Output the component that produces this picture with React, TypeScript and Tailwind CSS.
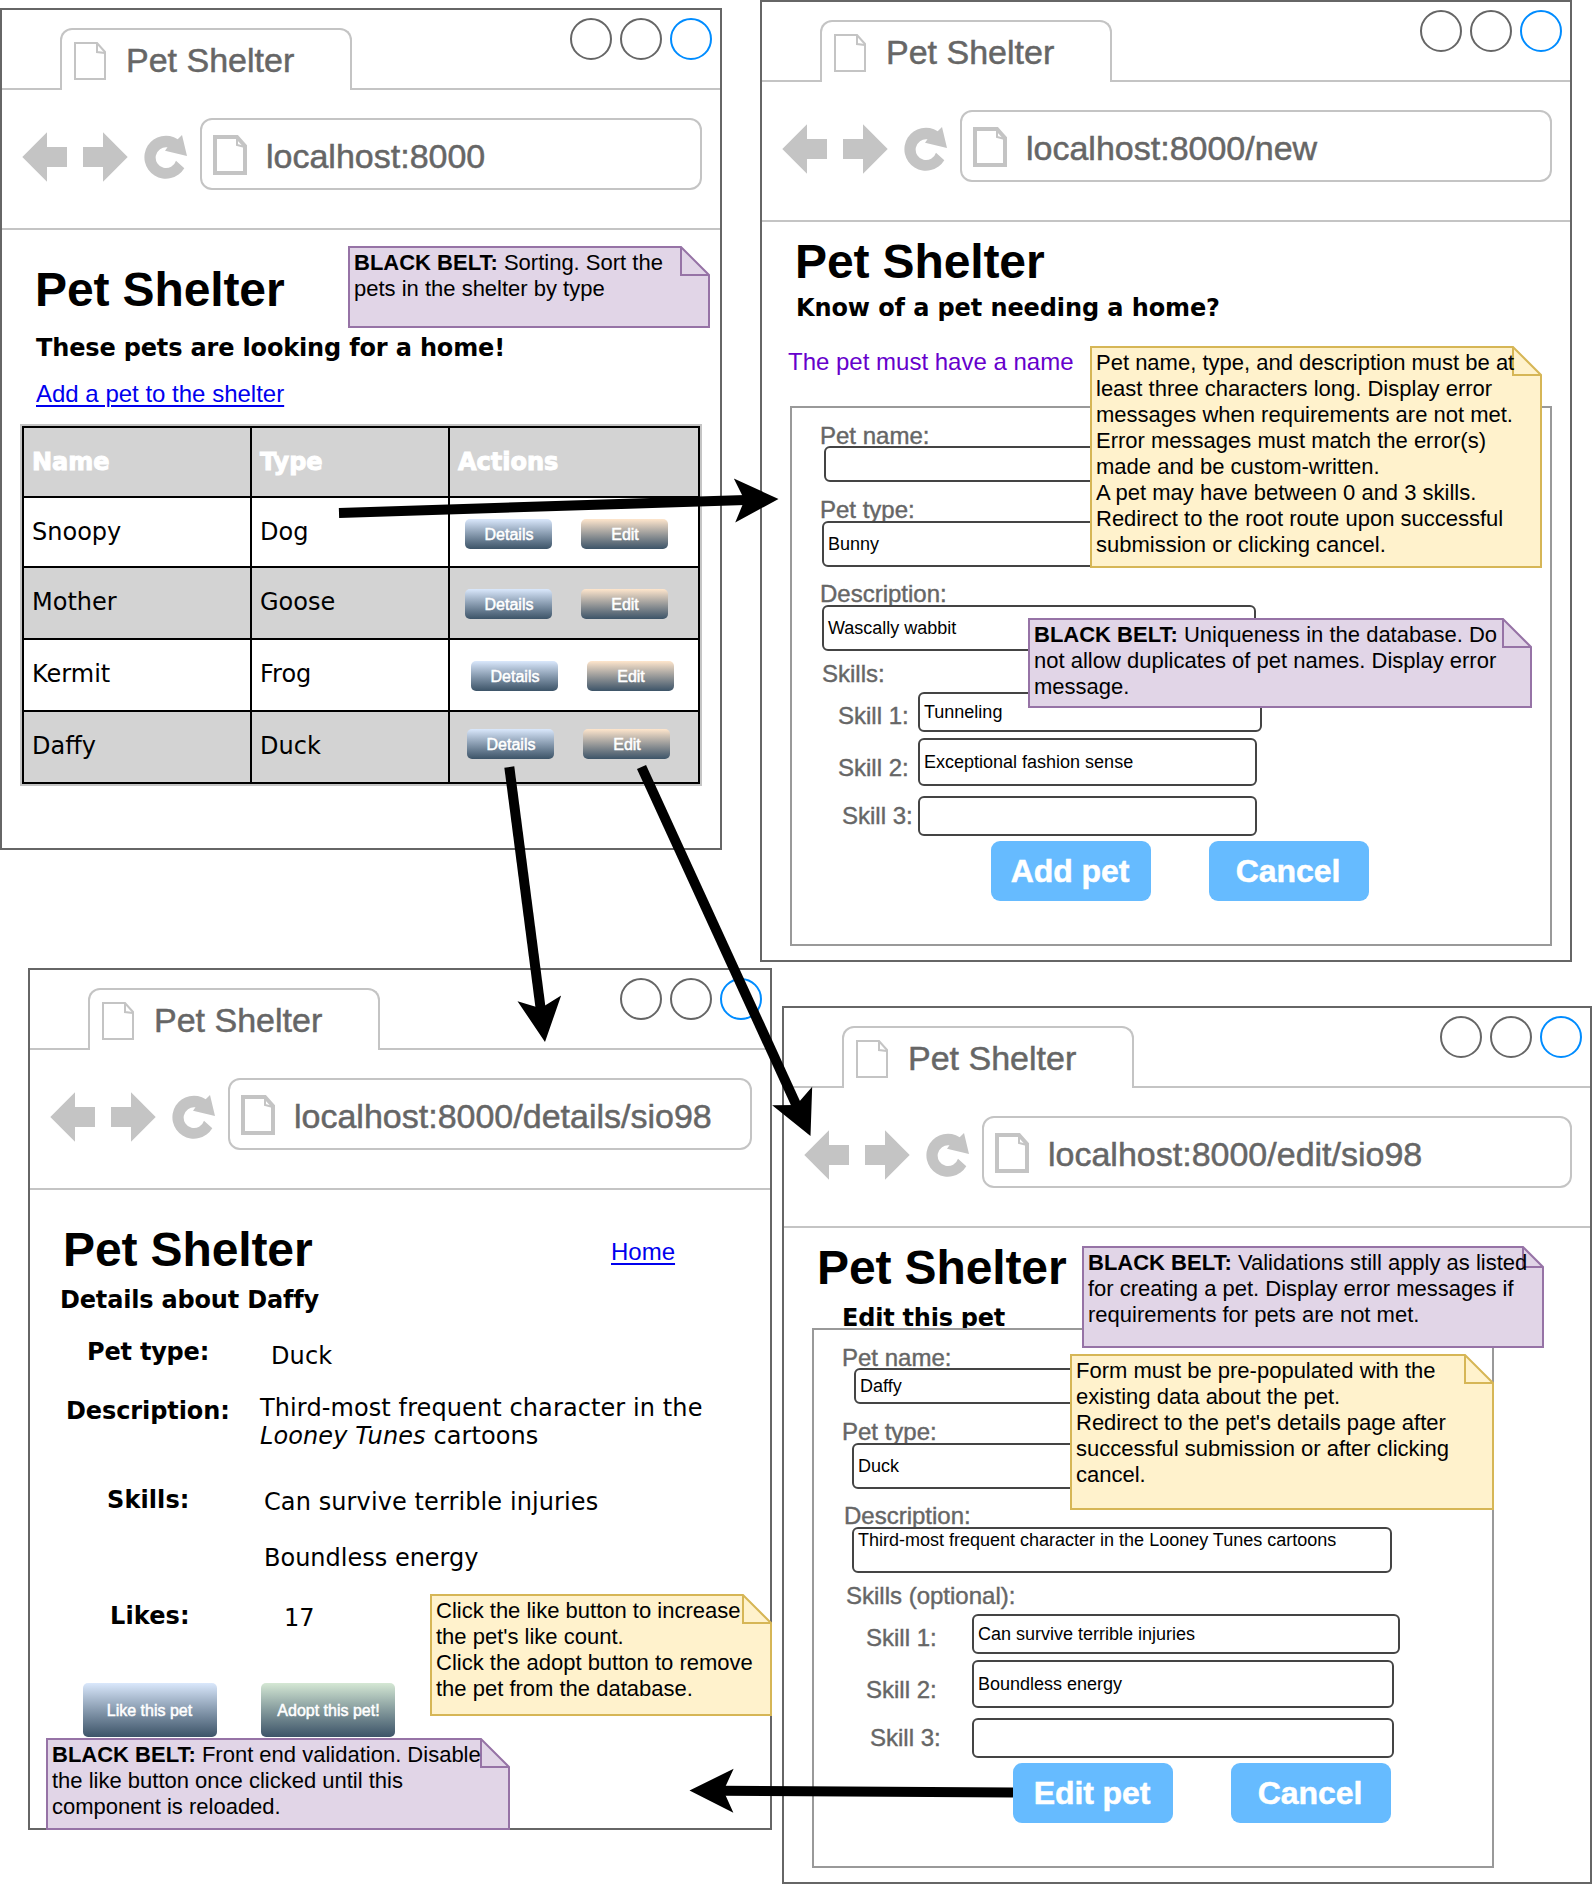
import React from "react";

const arial = "font-['Liberation_Sans',Arial,sans-serif]";
const verdana = "font-['DejaVu_Sans',Verdana,sans-serif]";

function BrowserWindow({ className, url, children }: { className: string; url: string; children: React.ReactNode }) {
  return (
    <section className={`absolute flex flex-col border-2 border-[#666666] bg-white ${className}`}>
      <header className="flex h-[220px] shrink-0 flex-col border-b-2 border-[#c4c4c4] text-[34px] leading-10 text-[#666666]">
        <div className="flex h-20 shrink-0">
          <div className="w-[58px] border-b-2 border-[#c4c4c4]" />
          <div className="mt-[18px] flex w-[292px] rounded-t-[12px] border-x-2 border-t-2 border-[#c4c4c4]">
            <svg className="mt-3 ml-3 h-[38px] w-8 shrink-0" viewBox="0 0 32 38" fill="none" stroke="#c4c4c4" strokeWidth="2">
              <path d="M1 1H23L31 10V37H1Z" />
              <path d="M23 1V10L31 11" />
            </svg>
            <span className="mt-2.5 ml-5 whitespace-nowrap [-webkit-text-stroke:0.5px_#666666]">Pet Shelter</span>
          </div>
          <div className="flex flex-1 justify-end gap-2 border-b-2 border-[#c4c4c4] pt-2 pr-2">
            <i className="size-[42px] rounded-full border-2 border-[#666666]" />
            <i className="size-[42px] rounded-full border-2 border-[#666666]" />
            <i className="size-[42px] rounded-full border-2 border-[#008cff]" />
          </div>
        </div>
        <nav className="flex pl-5">
          <svg className="mt-[42px] h-[50px] w-[45px] shrink-0" viewBox="0 0 45 50" fill="#c4c4c4">
            <path d="M0.3 25L25 0.3V15H45V35H25V49.7Z" />
          </svg>
          <svg className="mt-[42px] ml-4 h-[50px] w-[45px] shrink-0" viewBox="0 0 45 50" fill="#c4c4c4">
            <path d="M44.7 25L20 0.3V15H0V35H20V49.7Z" />
          </svg>
          <svg className="mt-[42px] ml-4 h-[50px] w-11 shrink-0" viewBox="144 132 44 50" fill="#c4c4c4">
            <path d="M177.7 139.2A21.5 21.5 0 1 0 184.3 168.3L176 160.7A10.4 10.4 0 1 1 167.5 147.3L165 150.7L187 156L182 135Z" />
          </svg>
          <div className="mt-7 mr-[18px] ml-3 flex h-[72px] flex-1 rounded-[12px] border-2 border-[#c4c4c4]">
            <svg className="mt-[15px] ml-[11px] h-10 w-[34px] shrink-0" viewBox="0 0 34 40" fill="none" stroke="#c4c4c4">
              <path strokeWidth="4" d="M2 2H24L32 11V38H2Z" />
              <path strokeWidth="2" d="M24 2V10L32 12" />
            </svg>
            <span className="mt-4 ml-[19px] whitespace-nowrap [-webkit-text-stroke:0.5px_#666666]">{url}</span>
          </div>
        </nav>
      </header>
      {children}
    </section>
  );
}

function Title({ className }: { className: string }) {
  return <h1 className={`text-[48px] leading-[56px] font-bold tracking-[-0.12px] whitespace-nowrap ${className}`}>Pet Shelter</h1>;
}

const noteTones = {
  purple: { fill: "#e1d5e7", stroke: "#9673a6" },
  yellow: { fill: "#fff2cc", stroke: "#d6b656" },
};

function Note({ className, w, h, fold = 28, tone, lines }: {
  className: string; w: number; h: number; fold?: number; tone: "purple" | "yellow"; lines: React.ReactNode[];
}) {
  const { fill, stroke } = noteTones[tone];
  return (
    <aside className={`absolute isolate pt-1 pl-1.5 text-[22px] leading-[26px] whitespace-nowrap ${className}`} style={{ width: w, height: h }}>
      <svg className="absolute inset-0 -z-10" width={w} height={h} fill={fill} stroke={stroke} strokeWidth="2">
        <path d={`M1 1H${w - fold - 1}L${w - 1} ${fold + 1}V${h - 1}H1Z`} />
        <path fill="none" d={`M${w - fold - 1} 1V${fold + 1}H${w - 1}`} />
      </svg>
      {lines.map((line, i) => <p key={i}>{line}</p>)}
    </aside>
  );
}

const tints = {
  blue: "from-[#dae8fc]",
  peach: "from-[#ffe6cc]",
  green: "from-[#d5e8d4]",
};

function GlossButton({ tint, className, children }: { tint: keyof typeof tints; className: string; children: string }) {
  return (
    <button className={`flex items-center justify-center rounded-[5px] bg-linear-to-b to-[#3d5468] pt-0.5 pl-px text-base leading-5 whitespace-nowrap text-white [-webkit-text-stroke:0.5px_white] ${tints[tint]} ${className}`}>
      {children}
    </button>
  );
}

const pets = [
  { name: "Snoopy", type: "Dog", row: "h-[70px] bg-white", cell: "", actions: "pt-[21px] pl-[15px]" },
  { name: "Mother", type: "Goose", row: "h-[72px] bg-[#d3d3d3]", cell: "pb-0.5", actions: "pt-[21px] pl-[15px]" },
  { name: "Kermit", type: "Frog", row: "h-[72px] bg-white", cell: "pb-0.5", actions: "pt-[21px] pl-[21px]" },
  { name: "Daffy", type: "Duck", row: "h-[72px] bg-[#d3d3d3]", cell: "pb-0.5", actions: "pt-[17px] pl-[17px]" },
];

function PetTable() {
  const cell = "flex items-center border-r-2 border-black pl-2";
  return (
    <div className={`mt-4 ml-[18px] w-[682px] border-2 border-[#c4c4c4] text-2xl ${verdana}`}>
      <div className="border-2 border-b-0 border-black">
        <div className="grid h-[70px] grid-cols-[228px_198px_248px] border-b-2 border-black bg-[#d3d3d3] font-bold text-white [-webkit-text-stroke:1px_white]">
          <div className={cell}>Name</div>
          <div className={cell}>Type</div>
          <div className="flex items-center pl-2">Actions</div>
        </div>
        {pets.map((p) => (
          <div key={p.name} className={`grid grid-cols-[228px_198px_248px] border-b-2 border-black ${p.row}`}>
            <div className={`${cell} ${p.cell}`}>{p.name}</div>
            <div className={`${cell} ${p.cell}`}>{p.type}</div>
            <div className={`flex items-start gap-[29px] ${arial} ${p.actions}`}>
              <GlossButton tint="blue" className="h-[30px] w-[87px]">Details</GlossButton>
              <GlossButton tint="peach" className="h-[30px] w-[87px]">Edit</GlossButton>
            </div>
          </div>
        ))}
      </div>
    </div>
  );
}

function Field({ className, children }: { className: string; children?: string }) {
  return (
    <div className={`relative flex shrink-0 items-center rounded-[6px] border-2 border-[#444444] bg-white pl-1 text-lg leading-6 whitespace-nowrap text-black ${className}`}>
      {children}
    </div>
  );
}

function SubmitButton({ children }: { children: string }) {
  return (
    <button className="flex h-[60px] w-40 items-center justify-center rounded-[9px] bg-[#66bbff] pr-[2px] text-[32px] leading-10 font-bold tracking-[-0.1px] whitespace-nowrap text-white [-webkit-text-stroke:0.5px_white]">
      {children}
    </button>
  );
}

type FormProps = {
  className: string;
  name: string; type: string; description: string; skills: [string, string, string];
  skillsLabel: string; submit: string;
  descriptionLabel: string; skillsLabelPos: string; skillRow: string; skillLabel: string; lastSkillLabel: string;
  nameField: string; typeField: string; descriptionField: string; firstSkill: string; otherSkill: string;
};

function PetForm(f: FormProps) {
  return (
    <form className={`relative flex h-[540px] flex-col border-2 border-[#999999] bg-white text-2xl leading-7 whitespace-nowrap text-[#666666] [&_label]:[-webkit-text-stroke:0.4px_#666666] ${f.className}`}>
      <label className="mt-3.5 ml-7">Pet name:</label>
      <Field className={`-mt-1 h-9 ${f.nameField}`}>{f.name}</Field>
      <label className="mt-3.5 ml-7">Pet type:</label>
      <Field className={`-mt-[3px] h-[46px] ${f.typeField}`}>{f.type}</Field>
      <label className={`mt-[13px] ${f.descriptionLabel}`}>Description:</label>
      <Field className={`-mt-[3px] h-[46px] ${f.descriptionField}`}>{f.description}</Field>
      <label className={`mt-[9px] ${f.skillsLabelPos}`}>{f.skillsLabel}</label>
      <div className={`mt-1 flex ${f.skillRow}`}>
        <label className={`mt-2.5 ${f.skillLabel}`}>Skill 1:</label>
        <Field className={`h-10 ${f.firstSkill}`}>{f.skills[0]}</Field>
      </div>
      <div className={`mt-1.5 flex ${f.skillRow}`}>
        <label className={`mt-4 ${f.skillLabel}`}>Skill 2:</label>
        <Field className={`h-12 ${f.otherSkill}`}>{f.skills[1]}</Field>
      </div>
      <div className={`mt-2.5 flex ${f.skillRow}`}>
        <label className={`mt-1.5 ${f.lastSkillLabel}`}>Skill 3:</label>
        <Field className={`h-10 ${f.otherSkill}`}>{f.skills[2]}</Field>
      </div>
      <div className="mt-[5px] ml-[199px] flex gap-[58px]">
        <SubmitButton>{f.submit}</SubmitButton>
        <SubmitButton>Cancel</SubmitButton>
      </div>
    </form>
  );
}

function Arrow({ x1, y1, x2, y2 }: { x1: number; y1: number; x2: number; y2: number }) {
  const length = Math.hypot(x2 - x1, y2 - y1);
  const angle = (Math.atan2(y2 - y1, x2 - x1) * 180) / Math.PI;
  return (
    <g transform={`translate(${x1} ${y1}) rotate(${angle})`}>
      <path d={`M0 -5H${length - 33}V5H0Z`} />
      <path d={`M${length} 0L${length - 44} 22L${length - 34} 0L${length - 44} -22Z`} />
    </g>
  );
}

export default function App() {
  return (
    <main className={`relative h-[1884px] w-[1592px] overflow-hidden bg-white text-black ${arial}`}>
      <BrowserWindow className="top-2 left-0 h-[842px] w-[722px]" url="localhost:8000">
        <Title className="mt-8 ml-[33px]" />
        <h2 className={`mt-4 ml-[34px] text-2xl leading-7 font-bold tracking-[-0.16px] whitespace-nowrap ${verdana}`}>These pets are looking for a home!</h2>
        <a className="mt-[18px] ml-[34px] w-fit text-2xl leading-7 whitespace-nowrap text-[#0000ee] underline decoration-2 underline-offset-[3px]">Add a pet to the shelter</a>
        <PetTable />
      </BrowserWindow>

      <BrowserWindow className="top-0 left-[760px] h-[962px] w-[812px]" url="localhost:8000/new">
        <Title className="mt-3 ml-[33px]" />
        <h2 className={`mt-1 ml-[34px] text-2xl leading-7 font-bold tracking-[-0.1px] whitespace-nowrap ${verdana}`}>Know of a pet needing a home?</h2>
        <p className="mt-[26px] ml-[26px] text-2xl leading-7 text-[#6600cc]">The pet must have a name</p>
        <PetForm
          className="mt-[30px] ml-7 w-[762px]"
          name="" type="Bunny" description="Wascally wabbit"
          skills={["Tunneling", "Exceptional fashion sense", ""]}
          skillsLabel="Skills:" submit="Add pet"
          descriptionLabel="ml-7" skillsLabelPos="ml-[30px]"
          skillRow="ml-[46px]" skillLabel="w-[80px]" lastSkillLabel="w-[80px] pl-1"
          nameField="ml-8 w-[433px]" typeField="ml-[30px] w-[434px]" descriptionField="ml-[30px] w-[434px]"
          firstSkill="w-[344px]" otherSkill="w-[339px]"
        />
      </BrowserWindow>

      <BrowserWindow className="top-[968px] left-7 h-[862px] w-[744px]" url="localhost:8000/details/sio98">
        <div className="mt-8 ml-[33px] flex">
          <Title className="w-[548px]" />
          <a className="mt-4 h-7 text-2xl leading-7 text-[#0000ee] underline decoration-2 underline-offset-[3px]">Home</a>
        </div>
        <div className={`flex flex-col text-2xl leading-7 tracking-[0.1px] whitespace-nowrap ${verdana}`}>
          <h2 className="mt-2 ml-[30px] font-bold tracking-[-0.18px]">Details about Daffy</h2>
          <div className="mt-6 ml-[57px] flex">
            <b className="w-[184px] tracking-[-0.2px]">Pet type:</b>
            <span className="mt-1">Duck</span>
          </div>
          <div className="mt-6 ml-9 flex">
            <b className="mt-[3px] w-[194px] tracking-[-0.1px]">Description:</b>
            <span>Third-most frequent character in the<br /><i>Looney Tunes</i> cartoons</span>
          </div>
          <div className="mt-9 ml-[77px] flex">
            <b className="w-[157px]">Skills:</b>
            <span className="mt-0.5">Can survive terrible injuries</span>
          </div>
          <span className="mt-7 ml-[234px] tracking-normal">Boundless energy</span>
          <div className="mt-[30px] ml-[80px] flex">
            <b className="w-[174px]">Likes:</b>
            <span className="mt-0.5">17</span>
          </div>
        </div>
        <div className="mt-[51px] ml-[53px] flex gap-11">
          <GlossButton tint="blue" className="h-[54px] w-[134px] pr-0.5">Like this pet</GlossButton>
          <GlossButton tint="green" className="h-[54px] w-[134px]">Adopt this pet!</GlossButton>
        </div>
      </BrowserWindow>

      <BrowserWindow className="top-[1006px] left-[782px] h-[878px] w-[810px]" url="localhost:8000/edit/sio98">
        <Title className="mt-3 ml-[33px]" />
        <h2 className={`mt-2 ml-[58px] text-2xl leading-7 font-bold tracking-[-0.22px] whitespace-nowrap ${verdana}`}>Edit this pet</h2>
        <PetForm
          className="-mt-1 ml-7 w-[682px]"
          name="Daffy" type="Duck" description="Third-most frequent character in the Looney Tunes cartoons"
          skills={["Can survive terrible injuries", "Boundless energy", ""]}
          skillsLabel="Skills (optional):" submit="Edit pet"
          descriptionLabel="ml-[30px]" skillsLabelPos="ml-8"
          skillRow="ml-[52px]" skillLabel="w-[106px]" lastSkillLabel="w-[106px] pl-1"
          nameField="ml-10 w-[538px]" typeField="ml-[38px] w-[540px]" descriptionField="ml-[38px] w-[540px] items-start! leading-[22px]!"
          firstSkill="w-[428px]" otherSkill="w-[422px]"
        />
      </BrowserWindow>

      <Note className="top-[246px] left-[348px]" w={362} h={82} tone="purple"
        lines={[<><b>BLACK BELT:</b> Sorting. Sort the</>, "pets in the shelter by type"]} />
      <Note className="top-[346px] left-[1090px]" w={452} h={222} tone="yellow"
        lines={[
          "Pet name, type, and description must be at",
          "least three characters long. Display error",
          "messages when requirements are not met.",
          "Error messages must match the error(s)",
          "made and be custom-written.",
          "A pet may have between 0 and 3 skills.",
          "Redirect to the root route upon successful",
          "submission or clicking cancel.",
        ]} />
      <Note className="top-[618px] left-[1028px]" w={504} h={90} tone="purple"
        lines={[<><b>BLACK BELT:</b> Uniqueness in the database. Do</>, "not allow duplicates of pet names. Display error", "message."]} />
      <Note className="top-[1594px] left-[430px]" w={342} h={122} tone="yellow"
        lines={["Click the like button to increase", "the pet's like count.", "Click the adopt button to remove", "the pet from the database."]} />
      <Note className="top-[1738px] left-[46px]" w={464} h={92} tone="purple"
        lines={[<><b>BLACK BELT:</b> Front end validation. Disable</>, "the like button once clicked until this", "component is reloaded."]} />
      <Note className="top-[1246px] left-[1082px]" w={462} h={102} fold={20} tone="purple"
        lines={[<><b>BLACK BELT:</b> Validations still apply as listed</>, "for creating a pet. Display error messages if", "requirements for pets are not met."]} />
      <Note className="top-[1354px] left-[1070px]" w={424} h={156} tone="yellow"
        lines={["Form must be pre-populated with the", "existing data about the pet.", "Redirect to the pet's details page after", "successful submission or after clicking", "cancel."]} />

      <svg className="pointer-events-none absolute inset-0" width="1592" height="1884" fill="#000">
        <Arrow x1={339} y1={513} x2={778.5} y2={499} />
        <Arrow x1={509.3} y1={767} x2={545} y2={1042} />
        <Arrow x1={641.5} y1={767} x2={810.5} y2={1136} />
        <Arrow x1={1013} y1={1792.5} x2={689.5} y2={1790.5} />
      </svg>
    </main>
  );
}
